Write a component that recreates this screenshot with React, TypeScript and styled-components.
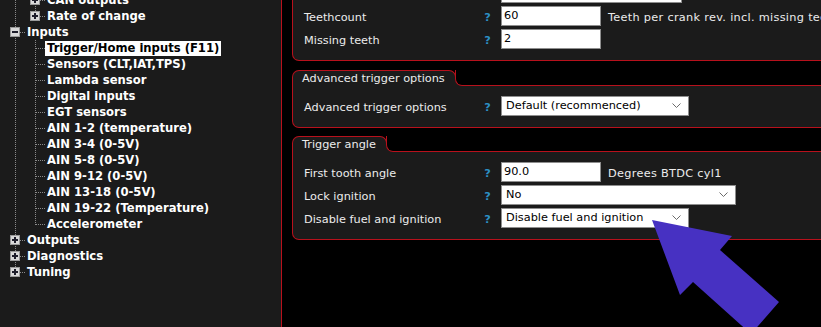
import React from "react";
import styled, { createGlobalStyle } from "styled-components";

const RED = "#b8111c";
const PANEL = "#1b1b1b";

const GlobalStyle = createGlobalStyle`
  html, body {
    margin: 0;
    padding: 0;
    background: #000;
    overflow: hidden;
  }
`;

const Screen = styled.div`
  position: relative;
  display: flex;
  width: 821px;
  height: 327px;
  overflow: hidden;
  background: #000;
`;

/* ---------- tree ---------- */

const TreePanel = styled.div`
  width: 281px;
  flex-shrink: 0;
  background: ${PANEL};
  overflow: hidden;
  font-family: "DejaVu Sans", Verdana, sans-serif;
  font-weight: bold;
  font-size: 11.6px;
  color: #fff;
`;

const TreeList = styled.ul`
  list-style: none;
  margin: -8px 0 0;
  padding: 0 0 0 5px;
`;

const TreeRow = styled.li`
  display: flex;
  align-items: center;
  height: 16px;
`;

const TreeLabel = styled.span<{ $selected?: boolean }>`
  padding: 0 2px;
  line-height: 15px;
  white-space: nowrap;
  background: ${(p) => (p.$selected ? "#fff" : "transparent")};
  color: ${(p) => (p.$selected ? "#000" : "#fff")};
`;

const GuideSvg = styled.svg`
  display: block;
  flex-shrink: 0;
`;

type GuideKind = "through" | "tee" | "elbow";

const Guide = ({ kind, box }: { kind: GuideKind; box?: "+" | "-" }) => (
  <GuideSvg width={20} height={16}>
    <g stroke="#8a8a8a" strokeWidth={1} strokeDasharray="1 1">
      <line x1={10.5} y1={0} x2={10.5} y2={kind === "elbow" ? 9 : 16} />
      {kind !== "through" && <line x1={11} y1={8.5} x2={20} y2={8.5} />}
    </g>
    {box && (
      <g>
        <rect x={5.5} y={3.5} width={9} height={9} fill="#d9d9d9" stroke="#9a9a9a" />
        <line x1={7} y1={8} x2={13} y2={8} stroke="#1d1d2a" strokeWidth={2} />
        {box === "+" && <line x1={10} y1={5} x2={10} y2={11} stroke="#1d1d2a" strokeWidth={2} />}
      </g>
    )}
  </GuideSvg>
);

type TreeItem = {
  label: string;
  guides: GuideKind[];
  box?: "+" | "-";
  selected?: boolean;
};

const inputChildren = [
  "Trigger/Home inputs (F11)",
  "Sensors (CLT,IAT,TPS)",
  "Lambda sensor",
  "Digital inputs",
  "EGT sensors",
  "AIN 1-2 (temperature)",
  "AIN 3-4 (0-5V)",
  "AIN 5-8 (0-5V)",
  "AIN 9-12 (0-5V)",
  "AIN 13-18 (0-5V)",
  "AIN 19-22 (Temperature)",
  "Accelerometer",
];

const tree: TreeItem[] = [
  { label: "CAN outputs", guides: ["through", "tee"], box: "+" },
  { label: "Rate of change", guides: ["through", "elbow"], box: "+" },
  { label: "Inputs", guides: ["tee"], box: "-" },
  ...inputChildren.map(
    (label, i): TreeItem => ({
      label,
      guides: ["through", i === inputChildren.length - 1 ? "elbow" : "tee"],
      selected: i === 0,
    })
  ),
  { label: "Outputs", guides: ["tee"], box: "+" },
  { label: "Diagnostics", guides: ["tee"], box: "+" },
  { label: "Tuning", guides: ["elbow"], box: "+" },
];

/* ---------- settings ---------- */

const RightPanel = styled.div`
  flex: 1;
  border-left: 1px solid ${RED};
  padding-left: 10px;
  overflow: hidden;
  font-family: "DejaVu Sans", Tahoma, sans-serif;
  font-size: 11.3px;
  color: #ececec;
`;

const Group = styled.section<{ $offset: number }>`
  width: 640px;
  margin-top: ${(p) => p.$offset}px;
`;

const GroupHead = styled.div`
  display: flex;
  height: 16px;
`;

const Tab = styled.div`
  box-sizing: border-box;
  height: 16px;
  padding: 0 10px 0 9px;
  border: 1px solid ${RED};
  border-bottom: none;
  border-radius: 7px 7px 0 0;
  background: ${PANEL};
  line-height: 15px;
  white-space: nowrap;
`;

const TabFill = styled.div`
  flex: 1;
  margin-left: -1px;
  background: ${PANEL};

  &::before {
    content: "";
    display: block;
    box-sizing: border-box;
    height: 100%;
    background: #000;
    border-left: 1px solid ${RED};
    border-bottom: 1px solid ${RED};
    border-bottom-left-radius: 7px;
  }
`;

const GroupBody = styled.div`
  border: 1px solid ${RED};
  border-top: none;
  border-radius: 0 0 7px 7px;
  background: ${PANEL};
  padding: 8px 0 10px 11px;
`;

const Field = styled.div`
  display: flex;
  align-items: center;
  height: 23px;
`;

const FieldLabel = styled.span`
  width: 176px;
  flex-shrink: 0;
  margin-top: 4px;
  white-space: nowrap;
`;

const Help = styled.span`
  width: 15px;
  margin: 4px 6px 0 0;
  text-align: center;
  color: #2c8fc4;
  font-weight: bold;
`;

const TextBox = styled.input<{ $width: number }>`
  box-sizing: border-box;
  width: ${(p) => p.$width}px;
  height: 20px;
  margin: 0;
  padding: 0 2px;
  border: 1px solid #8e8e8e;
  border-radius: 0;
  background: #fff;
  color: #000;
  font: inherit;
  outline: none;
`;

const SelectBox = styled.div<{ $width: number }>`
  box-sizing: border-box;
  display: flex;
  align-items: center;
  justify-content: space-between;
  width: ${(p) => p.$width}px;
  height: 20px;
  padding: 0 7px 0 4px;
  border: 1px solid #8e8e8e;
  background: #fff;
  color: #000;
  white-space: nowrap;
`;

const Unit = styled.span`
  margin: 4px 0 0 7px;
  white-space: nowrap;
  letter-spacing: 0.3px;
`;

const Chevron = () => (
  <svg width={9} height={6} viewBox="0 0 9 6">
    <polyline points="0.5,0.5 4.5,4.5 8.5,0.5" fill="none" stroke="#6b6b6b" strokeWidth={1} />
  </svg>
);

type Row = {
  label: string;
  kind: "text" | "select";
  value: string;
  width: number;
  unit?: string;
};

const Setting = ({ row }: { row: Row }) => (
  <Field>
    <FieldLabel>{row.label}</FieldLabel>
    <Help>?</Help>
    {row.kind === "text" ? (
      <TextBox $width={row.width} readOnly value={row.value} />
    ) : (
      <SelectBox $width={row.width}>
        <span>{row.value}</span>
        <Chevron />
      </SelectBox>
    )}
    {row.unit && <Unit>{row.unit}</Unit>}
  </Field>
);

const groups: { title: string; offset: number; rows: Row[] }[] = [
  {
    title: "Trigger",
    offset: -43,
    rows: [
      { label: "Trigger", kind: "select", value: "Missing tooth", width: 181 },
      {
        label: "Teethcount",
        kind: "text",
        value: "60",
        width: 100,
        unit: "Teeth per crank rev. incl. missing teeth",
      },
      { label: "Missing teeth", kind: "text", value: "2", width: 100 },
    ],
  },
  {
    title: "Advanced trigger options",
    offset: 9,
    rows: [
      {
        label: "Advanced trigger options",
        kind: "select",
        value: "Default (recommenced)",
        width: 188,
      },
    ],
  },
  {
    title: "Trigger angle",
    offset: 8,
    rows: [
      {
        label: "First tooth angle",
        kind: "text",
        value: "90.0",
        width: 100,
        unit: "Degrees BTDC cyl1",
      },
      { label: "Lock ignition", kind: "select", value: "No", width: 235 },
      {
        label: "Disable fuel and ignition",
        kind: "select",
        value: "Disable fuel and ignition",
        width: 188,
      },
    ],
  },
];

const Overlay = styled.svg`
  position: absolute;
  left: 0;
  top: 0;
  pointer-events: none;
`;

const App = () => (
  <Screen>
    <GlobalStyle />
    <TreePanel>
      <TreeList>
        {tree.map((item) => (
          <TreeRow key={item.label}>
            {item.guides.map((g, i) => (
              <Guide key={i} kind={g} box={i === item.guides.length - 1 ? item.box : undefined} />
            ))}
            <TreeLabel $selected={item.selected}>{item.label}</TreeLabel>
          </TreeRow>
        ))}
      </TreeList>
    </TreePanel>
    <RightPanel>
      {groups.map((group) => (
        <Group key={group.title} $offset={group.offset}>
          <GroupHead>
            <Tab>{group.title}</Tab>
            <TabFill />
          </GroupHead>
          <GroupBody>
            {group.rows.map((row) => (
              <Setting key={row.label} row={row} />
            ))}
          </GroupBody>
        </Group>
      ))}
    </RightPanel>
    <Overlay width={821} height={327}>
      <polygon
        points="652,220 732,236 720,250 779,302 751,334 693,282 680,295"
        fill="#4731c2"
      />
    </Overlay>
  </Screen>
);

export default App;
